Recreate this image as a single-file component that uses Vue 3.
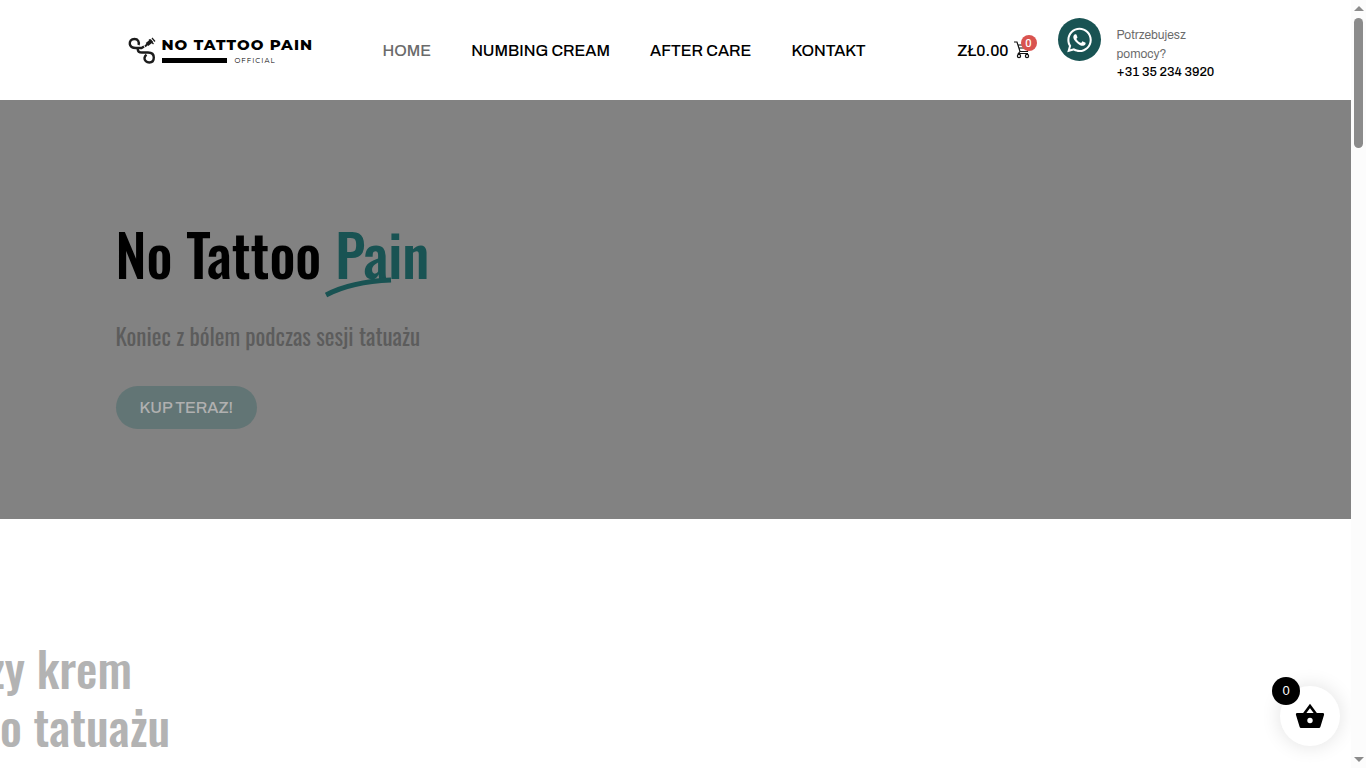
<template>
  <div class="shell">
    <div class="page">

      <header class="header">
        <div class="container header-row">
          <a href="#" class="logo" aria-label="No Tattoo Pain Official">
            <svg class="logo-mark" viewBox="0 0 28 28" fill="none" stroke="#1c1c1c" aria-hidden="true">
              <path d="M10.500 9C11.500 6 10 3 6.500 3C3 3 1.500 5.500 1.800 8C2.200 11 5 12 8 12H13.500L16 10.500" stroke-width="2.400" />
              <path d="M9.800 12V13.500C9.800 16 11.500 16.500 14 16.500H20C24 16.500 25.800 18.500 25.800 21.500C25.800 24.500 24 26.500 21.300 26.500C18.500 26.500 16.300 24.500 16.500 22C16.700 20.500 17.500 19.500 18.500 18.800" stroke-width="2.400" />
              <path d="M17 10.500L19.500 8" stroke-width="2" />
              <path d="M19 8.500L24 4.500" stroke-width="4" />
              <path d="M21 3.500L25.500 8M24 2L27 5.500" stroke-width="1.200" />
            </svg>
            <span class="logo-text">
              <span class="logo-name">NO TATTOO PAIN</span>
              <span class="logo-sub"><i class="logo-bar"></i><span>OFFICIAL</span></span>
            </span>
          </a>

          <nav class="nav">
            <a v-for="item in menu" :key="item" href="#" :class="{ active: item === current }">{{ item }}</a>
          </nav>

          <a href="#" class="cart">
            <span>ZŁ0.00</span>
            <span class="cart-icon">
              <svg viewBox="0 0 18 18" width="18" height="18" fill="none" stroke="#111" stroke-width="1.2" aria-hidden="true">
                <path d="M1 1H4L7 10.500H14.500L16.500 4H5M7 10.500L5.500 12.500H15M5.600 7H15.500" />
                <circle cx="6" cy="15" r="1.600" />
                <circle cx="14" cy="15" r="1.600" />
              </svg>
              <span class="cart-count">{{ count }}</span>
            </span>
          </a>

          <div class="help">
            <a href="#" class="whatsapp" aria-label="WhatsApp">
              <svg viewBox="0 0 448 512" width="25" height="28" fill="#fff" aria-hidden="true">
                <path d="M380.9 97.1C339 55.1 283.2 32 223.9 32c-122.4 0-222 99.6-222 222 0 39.1 10.2 77.3 29.6 111L0 480l117.7-30.9c32.4 17.7 68.9 27 106.1 27h.1c122.3 0 224.1-99.6 224.1-222 0-59.3-25.2-115-67.1-157zm-157 341.6c-33.2 0-65.7-8.9-94-25.7l-6.7-4-69.8 18.3L72 359.2l-4.4-7c-18.5-29.4-28.2-63.3-28.2-98.2 0-101.7 82.8-184.5 184.6-184.5 49.3 0 95.6 19.2 130.4 54.1 34.8 34.9 56.2 81.2 56.1 130.5 0 101.8-84.9 184.6-186.6 184.6zm101.2-138.2c-5.5-2.8-32.8-16.2-37.9-18-5.1-1.9-8.8-2.8-12.5 2.8-3.7 5.6-14.3 18-17.6 21.8-3.2 3.7-6.5 4.2-12 1.4-32.6-16.3-54-29.1-75.5-66-5.7-9.8 5.7-9.1 16.3-30.3 1.8-3.7.9-6.9-.5-9.7-1.4-2.8-12.5-30.1-17.1-41.2-4.5-10.8-9.1-9.3-12.5-9.5-3.2-.2-6.9-.2-10.6-.2-3.7 0-9.7 1.4-14.8 6.9-5.1 5.6-19.4 19-19.4 46.3 0 27.3 19.9 53.7 22.6 57.4 2.8 3.7 39.1 59.7 94.8 83.8 35.2 15.2 49 16.5 66.6 13.9 10.7-1.6 32.8-13.4 37.4-26.4 4.6-13 4.6-24.1 3.2-26.4-1.3-2.5-5-3.9-10.5-6.6z" />
              </svg>
            </a>
            <div class="help-text">
              <span>Potrzebujesz pomocy?</span>
              <a href="#">+31 35 234 3920</a>
            </div>
          </div>
        </div>
      </header>

      <section class="hero">
        <div class="container hero-body">
          <h1>
            No Tattoo
            <span class="accent">Pain<svg class="stroke" viewBox="0 0 68 22" fill="none" aria-hidden="true"><path d="M1 18C20 8 42 4 66 3" stroke="#195353" stroke-width="5" /></svg></span>
          </h1>
          <p class="lead">Koniec z bólem podczas sesji tatuażu</p>
          <button type="button" class="buy">KUP TERAZ!</button>
        </div>
      </section>

      <section class="about">
        <h2><span class="slide">zy krem</span><br />o tatuażu</h2>
      </section>

      <button type="button" class="basket" aria-label="Koszyk">
        <svg viewBox="0 0 30 28" width="30" height="28" aria-hidden="true">
          <path d="M9 12L15 4L21 12" fill="none" stroke="#000" stroke-width="2.600" />
          <path d="M2 11H28C29 11 29.300 12 29 13L25.500 24.500C25.200 25.500 24.500 26 23.500 26H6.500C5.500 26 4.800 25.500 4.500 24.500L1 13C.7 12 1 11 2 11Z" />
          <circle cx="15" cy="18.500" r="2.700" fill="#fff" />
        </svg>
        <span class="basket-count">{{ count }}</span>
      </button>
    </div>

    <div class="scrollbar" aria-hidden="true">
      <svg viewBox="0 0 10 5" width="10" height="5"><path d="M0 5L5 0L10 5Z" /></svg>
      <div class="track"><div class="thumb"></div></div>
      <svg viewBox="0 0 10 5" width="10" height="5"><path d="M0 0L5 5L10 0Z" /></svg>
    </div>
  </div>
</template>

<script setup>
import { ref } from "vue";

const menu = ["HOME", "NUMBING CREAM", "AFTER CARE", "KONTAKT"];
const current = ref("HOME");
const count = ref(0);
</script>

<style>
body { margin: 0; overflow: hidden; background: #fff; }
</style>

<style scoped>
.shell {
  display: flex;
  height: 100vh;
  font-family: Archivo, "Liberation Sans", Arial, sans-serif;
  color: #000;
}
.page { flex: 1; min-width: 0; overflow: hidden; position: relative; }
.container { max-width: 1120px; margin: 0 auto; box-sizing: border-box; }
a { color: inherit; text-decoration: none; }

.header { height: 100px; background: #fff; }
.header-row { display: flex; height: 100%; padding-left: 12px; }

.logo { display: flex; align-items: center; gap: 6px; width: 255px; }
.logo-mark { width: 28px; height: 28px; }
.logo-text { display: flex; flex-direction: column; gap: 5px; }
.logo-name {
  font: 800 15px/15px Montserrat, Inter, sans-serif;
  letter-spacing: 1px;
  white-space: nowrap;
}
.logo-sub {
  display: flex;
  align-items: center;
  gap: 8px;
  font: 7px/7px Montserrat, Inter, sans-serif;
  letter-spacing: 1px;
}
.logo-bar { width: 65px; height: 5px; background: #000; }

.nav { display: flex; align-items: center; gap: 40px; font-size: 16px; font-weight: 500; }
.nav a { white-space: nowrap; }
.nav .active { color: #6b6b6b; }

.cart {
  display: flex;
  align-items: center;
  gap: 4px;
  margin-left: auto;
  font-size: 16px;
  font-weight: 500;
}
.cart-icon { position: relative; display: flex; }
.cart-count {
  position: absolute;
  top: -6px;
  right: -6px;
  width: 16px;
  height: 16px;
  border-radius: 50%;
  background: #d9534f;
  color: #fff;
  font-size: 11px;
  line-height: 16px;
  text-align: center;
}

.help { display: flex; gap: 16px; margin-left: 27px; padding: 18px 21px 0 0; }
.whatsapp {
  display: flex;
  align-items: center;
  justify-content: center;
  width: 43px;
  height: 43px;
  border-radius: 50%;
  background: #195353;
}
.help-text {
  width: 98px;
  padding-top: 8px;
  color: #6b6b6b;
  font-size: 12px;
  line-height: 19px;
}
.help-text a { display: block; color: #000; font-size: 13px; font-weight: 500; line-height: 16px; white-space: nowrap; }

.hero { background: #828282; }
.hero-body { padding: 108px 0 90px; }
h1, h2 {
  margin: 0;
  font-family: Oswald, "Liberation Sans Narrow", "Roboto Condensed", "Liberation Sans", sans-serif;
  font-weight: 500;
}
h1 { font-size: 57px; line-height: 90px; }
.accent { position: relative; color: #195353; }
.stroke { position: absolute; left: -10px; bottom: -4px; width: 68px; height: 22px; }
.lead {
  margin: 20px 0 32px;
  color: #5c5c5c;
  font: 400 23px/36px Oswald, "Liberation Sans Narrow", "Roboto Condensed", "Liberation Sans", sans-serif;
}
.buy {
  display: block;
  padding: 0 24px;
  height: 43px;
  border: 0;
  border-radius: 22px;
  background: #627575;
  color: #b0b0b0;
  font: 500 16px/43px Archivo, "Liberation Sans", Arial, sans-serif;
  cursor: pointer;
}

.about { padding-top: 120px; }
h2 { color: #b3b3b3; font-size: 48px; line-height: 58px; white-space: nowrap; }
.slide { margin-left: -13px; }

.basket {
  position: absolute;
  right: 11px;
  bottom: 22px;
  display: flex;
  align-items: center;
  justify-content: center;
  width: 60px;
  height: 60px;
  padding: 0;
  border: 0;
  border-radius: 50%;
  background: #fff;
  box-shadow: 0 0 20px rgba(0, 0, 0, 0.12);
  cursor: pointer;
}
.basket-count {
  position: absolute;
  top: -9px;
  left: -8px;
  width: 28px;
  height: 28px;
  border-radius: 50%;
  background: #000;
  color: #fff;
  font-size: 13px;
  line-height: 28px;
}

.scrollbar {
  display: flex;
  flex-direction: column;
  align-items: center;
  gap: 7px;
  width: 15px;
  padding: 6px 0;
  box-sizing: border-box;
  background: #fcfcfc;
  fill: #8b8b8b;
}
.track { flex: 1; }
.thumb { width: 9px; height: 130px; border-radius: 5px; background: #8b8b8b; }
</style>
